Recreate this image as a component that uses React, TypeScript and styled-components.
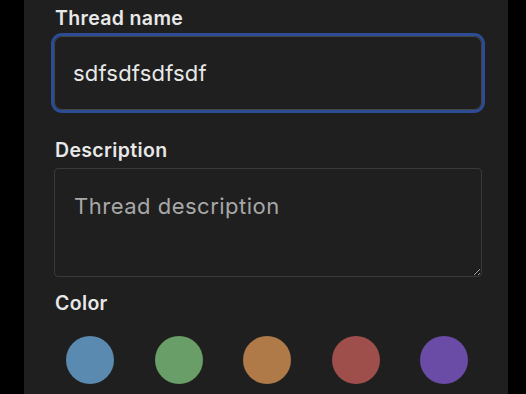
import React, { FC, useState } from 'react'
import styled, { createGlobalStyle } from 'styled-components'

const GlobalStyle = createGlobalStyle`
	html, body {
		margin: 0;
		padding: 0;
		background: #000;
		height: 100%;
		overflow: hidden;
	}
	body {
		font-family: Inter, 'Noto Sans', 'Liberation Sans', sans-serif;
		color: #e6e6e6;
	}
`

const colors = ['#5a8ab0', '#6a9e68', '#b07a48', '#9e4f4c', '#6a4ca6']

const App: FC = () => {
	const [name, setName] = useState('sdfsdfsdfsdf')
	const [selected, setSelected] = useState<string | null>(null)

	return (
		<>
			<GlobalStyle />
			<StyledPanel>
				<StyledField>
					<StyledLabel htmlFor="thread-name">Thread name</StyledLabel>
					<StyledInput
						id="thread-name"
						value={name}
						onChange={(e) => setName(e.target.value)}
						$focused
					/>
				</StyledField>
				<StyledField $top={28}>
					<StyledLabel htmlFor="thread-desc">Description</StyledLabel>
					<StyledTextarea id="thread-desc" placeholder="Thread description" />
				</StyledField>
				<StyledField $top={14}>
					<StyledLabel as="div">Color</StyledLabel>
					<StyledSwatches>
						{colors.map((c) => (
							<StyledSwatch
								key={c}
								$color={c}
								$active={selected === c}
								onClick={() => setSelected(c)}
								aria-label={c}
							/>
						))}
					</StyledSwatches>
				</StyledField>
			</StyledPanel>
		</>
	)
}

export default App

const StyledPanel = styled.div`
	margin-left: 24px;
	width: 484px;
	height: 394px;
	box-sizing: border-box;
	background: #1f1f1f;
	padding: 6px 26px 0 30px;
	display: flex;
	flex-direction: column;
`

const StyledField = styled.div<{ $top?: number }>`
	display: flex;
	flex-direction: column;
	gap: 5px;
	margin-top: ${({ $top }) => $top ?? 0}px;
`

const StyledLabel = styled.label`
	display: block;
	font-size: 19.5px;
	line-height: 25px;
	font-weight: 600;
	letter-spacing: 0.35px;
	color: #e8e8e8;
	padding-left: 1px;
`

const StyledInput = styled.input<{ $focused?: boolean }>`
	box-sizing: border-box;
	width: 100%;
	height: 74px;
	margin: 0;
	padding: 0 18px;
	background: #1f1f1f;
	border: 1px solid #444;
	border-radius: 8px;
	color: #e8e8e8;
	font-family: inherit;
	font-size: 22px;
	letter-spacing: 0.2px;
	outline: ${({ $focused }) => ($focused ? '3px solid #2c4d95' : 'none')};
	outline-offset: 0;
`

const StyledTextarea = styled.textarea`
	box-sizing: border-box;
	width: 100%;
	height: 109px;
	margin: 0;
	padding: 24px 19px 20px;
	background: #1f1f1f;
	border: 1px solid #3a3a3a;
	border-radius: 4px;
	color: #e8e8e8;
	font-family: inherit;
	font-size: 22px;
	letter-spacing: 0.5px;
	color-scheme: dark;
	outline: none;
	resize: vertical;
	&::placeholder {
		color: #a8a8a8;
	}
`

const StyledSwatches = styled.div`
	display: flex;
	justify-content: space-between;
	padding: 15px 14px 0 12px;
`

const StyledSwatch = styled.button<{ $color: string; $active: boolean }>`
	width: 48px;
	height: 48px;
	padding: 0;
	border-radius: 50%;
	border: none;
	background: ${({ $color }) => $color};
	box-shadow: ${({ $active }) => ($active ? '0 0 0 3px #fff' : 'none')};
	cursor: pointer;
`
